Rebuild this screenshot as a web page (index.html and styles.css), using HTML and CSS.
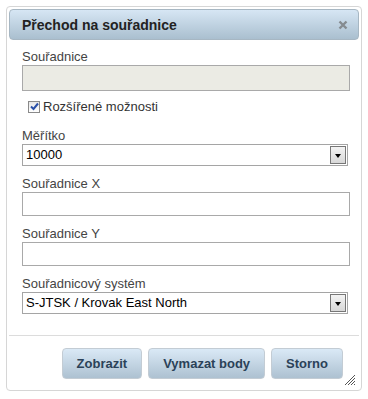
FILE: index.html
```html
<!DOCTYPE html>
<html lang="cs">
  <head>
    <meta charset="UTF-8">
    <title>Přechod na souřadnice</title>
    <link rel="stylesheet" href="styles.css">
  </head>
  <body>
    <div class="dialog">
      <div class="titlebar">
        <span class="title">Přechod na souřadnice</span>
        <svg class="close" width="10" height="10" viewBox="0 0 10 10">
          <path d="M1.5 1.5 L8.5 8.5 M8.5 1.5 L1.5 8.5" stroke="#858b90" stroke-width="2.4"/>
        </svg>
      </div>
      <div class="content">
        <label class="field">
          <span class="label">Souřadnice</span>
          <input type="text" class="input" disabled>
        </label>
        <label class="check">
          <span class="box">
            <svg width="9" height="9" viewBox="0 0 9 9"><path d="M1 4.5 L3.5 7 L8 1.5" fill="none" stroke="#2a50a8" stroke-width="2"/></svg>
          </span>
          Rozšířené možnosti
        </label>
        <label class="field">
          <span class="label">Měřítko</span>
          <span class="select">10000<span class="arrow"></span></span>
        </label>
        <label class="field">
          <span class="label">Souřadnice X</span>
          <input type="text" class="input">
        </label>
        <label class="field">
          <span class="label">Souřadnice Y</span>
          <input type="text" class="input">
        </label>
        <label class="field">
          <span class="label">Souřadnicový systém</span>
          <span class="select">S-JTSK / Krovak East North<span class="arrow"></span></span>
        </label>
      </div>
      <div class="buttonpane">
        <button class="btn">Zobrazit</button>
        <button class="btn">Vymazat body</button>
        <button class="btn">Storno</button>
      </div>
      <svg class="grip" width="12" height="12" viewBox="0 0 12 12">
        <path d="M11 1 L1 11 M11 4 L4 11 M11 7 L7 11 M11 10 L10 11" stroke="#555" stroke-width="1"/>
      </svg>
    </div>
  </body>
</html>
```

FILE: styles.css
```css
body {
  margin: 0;
  background: #fff;
  font-family: "Liberation Sans", Arial, sans-serif;
  color: #333;
}
.dialog {
  position: relative;
  width: 350px;
  height: 379px;
  margin: 6px;
  padding: 2px;
  border: 1px solid #d6d6d6;
  border-radius: 4px;
  background: #fff;
  display: flex;
  flex-direction: column;
}
.titlebar {
  height: 29px;
  border: 1px solid #a7b7c3;
  border-radius: 4px;
  background: linear-gradient(#d6e6f4, #aabfcf);
  display: flex;
  align-items: center;
  justify-content: space-between;
  padding: 0 10px 0 12px;
}
.title {
  font-weight: bold;
  font-size: 14px;
  color: #222;
}
.close {
  display: block;
}
.content {
  padding: 9px 8px 0 13px;
  display: flex;
  flex-direction: column;
  gap: 10px;
  height: 286px;
  border-bottom: 1px solid #dcdcdc;
}
.field {
  display: flex;
  flex-direction: column;
  gap: 1px;
}
.label {
  font-size: 13px;
  line-height: 15px;
  color: #444;
}
.input {
  box-sizing: border-box;
  width: 328px;
  height: 24px;
  margin: 0;
  border: 1px solid #a9a9a9;
  background: #fff;
  font: 13px "Liberation Sans", Arial, sans-serif;
}
.input:disabled {
  background: #ebebe4;
  height: 26px;
}
.check {
  display: flex;
  align-items: center;
  gap: 3px;
  padding-left: 6px;
  font-size: 13px;
  color: #333;
  margin: -2px 0 4px;
}
.box {
  box-sizing: border-box;
  width: 12px;
  height: 12px;
  border: 1px solid #8a8a8a;
  background: linear-gradient(#e6e6e6, #fff);
  display: flex;
  align-items: center;
  justify-content: center;
}
.select {
  box-sizing: border-box;
  position: relative;
  width: 326px;
  height: 22px;
  border: 1px solid #a5a5a5;
  font-size: 13px;
  line-height: 20px;
  padding-left: 3px;
  color: #000;
}
.arrow {
  position: absolute;
  right: 1px;
  top: 1px;
  width: 16px;
  height: 18px;
  box-sizing: border-box;
  border: 1px solid #777;
  background: linear-gradient(#f3f3f3, #d8d8d8);
}
.arrow::after {
  content: "";
  position: absolute;
  left: 4px;
  top: 7px;
  border-left: 3px solid transparent;
  border-right: 3px solid transparent;
  border-top: 4px solid #000;
}
.buttonpane {
  display: flex;
  justify-content: flex-end;
  gap: 6px;
  padding: 12px 16px 0 0;
}
.btn {
  height: 31px;
  padding: 0 14px;
  border: 1px solid #c3ccd4;
  border-radius: 4px;
  background: linear-gradient(#dae9f6, #adc1d1);
  font: bold 13px "Liberation Sans", Arial, sans-serif;
  color: #2b4258;
}
.grip {
  position: absolute;
  right: 5px;
  bottom: 4px;
}
```
